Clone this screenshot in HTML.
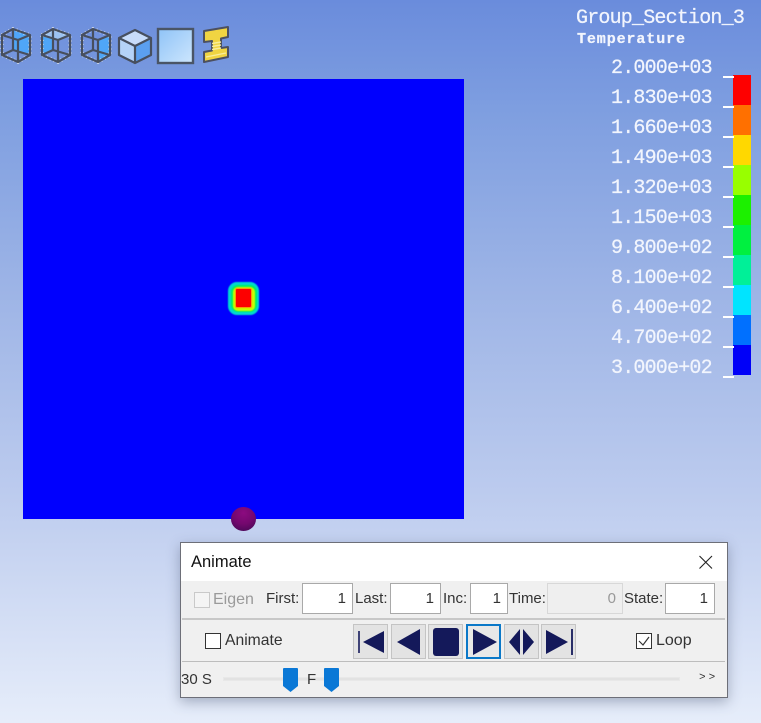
<!DOCTYPE html>
<html><head><meta charset="utf-8"><style>
html,body{margin:0;padding:0}
body{width:761px;height:723px;position:relative;overflow:hidden;background:linear-gradient(180deg,#6a8cdc 0%,#7e9ee0 15%,#9db4e6 40%,#bccbee 68%,#e6edfa 100%);font-family:"Liberation Sans","Noto Sans CJK SC",sans-serif}
.a{position:absolute}
.m{position:absolute;font-family:"Liberation Mono",monospace;color:#f2f5fd;white-space:pre;-webkit-text-stroke:.25px #f2f5fd}
.v{font-size:20px;letter-spacing:-.8px;left:611px;line-height:20px;font-weight:400}
.s{position:absolute;background:#fff;left:723px;width:11px;height:1.5px}
.seg{position:absolute;left:733px;width:18px;height:30px}
.t{position:absolute;font-size:15px;color:#333;line-height:18px;white-space:pre}
.i{position:absolute;top:583px;height:29px;background:#fff;border:1px solid #a9a9a9;box-sizing:content-box;text-align:right;font-size:15px;line-height:29px;color:#333}
.i span{margin-right:6px}
.b{position:absolute;top:624px;width:33px;height:33px;background:#e3e3e3;border:1px solid #c4c4c4}
.b svg{display:block;width:33px;height:33px}
</style></head><body>
<svg class="a" style="left:0;top:24px" width="235" height="44" viewBox="0 0 235 44" fill="none">
<defs>
<linearGradient id="g" x1="0" y1="0" x2="1" y2="1"><stop offset="0" stop-color="#8fc3f7"/><stop offset="1" stop-color="#cde6fd"/></linearGradient>
<path id="c1" d="M2 11 13 5 30 11V31L18 38 2 31Z"/>
</defs>
<!-- icon 1 -->
<path d="M13 5 30 11V31L13 26Z" fill="#4fa6f8"/>
<use href="#c1" stroke="#e4e8f0" stroke-width="3.6" stroke-dasharray="1 3"/>
<path d="M2 11 13 5 30 11V31L18 38 2 31Z M2 11 18 16 30 11 M18 16V38 M13 5V26 M2 31 13 26 30 31" stroke="#474f5e" stroke-width="2.2" stroke-linejoin="round"/>
<!-- icon 2 -->
<g transform="translate(40,0)">
<path d="M2 11 13 5V26L2 31Z" fill="#4fa6f8"/><path d="M2 11 13 5 30 11 18 16Z" fill="#9cc2f2"/>
<use href="#c1" stroke="#e4e8f0" stroke-width="3.6" stroke-dasharray="1 3"/>
<path d="M2 11 13 5 30 11V31L18 38 2 31Z M2 11 18 16 30 11 M18 16V38 M13 5V26 M2 31 13 26 30 31" stroke="#474f5e" stroke-width="2.2" stroke-linejoin="round"/>
</g>
<!-- icon 3 -->
<g transform="translate(80,0)">
<path d="M18 16 30 11V31L18 38Z" fill="#4fa6f8"/>
<use href="#c1" stroke="#e4e8f0" stroke-width="3.6" stroke-dasharray="1 3"/>
<path d="M2 11 13 5 30 11V31L18 38 2 31Z M2 11 18 16 30 11 M18 16V38 M13 5V26 M2 31 13 26 30 31" stroke="#474f5e" stroke-width="2.2" stroke-linejoin="round"/>
</g>
<!-- solid cube -->
<path d="M119 14 135 6 151 14 135 21Z" fill="#c8dcfa"/>
<path d="M119 15 135 22V38L119 30Z" fill="#b5d3f8"/><path d="M135 22 151 15V30L135 38Z" fill="#5b9fef"/>
<path d="M119 14 135 6 151 14V31L135 39 119 31Z M119 14 135 22 151 14 M135 22V39" stroke="#474f5e" stroke-width="2.2" stroke-linejoin="round"/>
<!-- surface -->
<rect x="158" y="5" width="35" height="34" fill="url(#g)" stroke="#4a5566" stroke-width="2.4"/>
<!-- I-beam -->
<path d="M204 7 228 3V13L221 14.5V24L228 23V33L204 38V28L212 26.5V17L204 18Z" fill="#f0d442" stroke="#4c5060" stroke-width="2" stroke-linejoin="round"/>
<path d="M212 19.5 221 18M212 22.5 221 21M212 25.5 221 24M206 33 226 29" stroke="#f8ee9c" stroke-width="1.4"/>
</svg>
<div class="a" style="left:23px;top:79px;width:441px;height:440px;background:#0000fe"></div>
<div class="a" style="left:228px;top:282px;width:31px;height:33px;border-radius:9px;background:#00d8d0;filter:blur(.6px)"></div>
<div class="a" style="left:231px;top:285px;width:26px;height:27px;border-radius:7px;background:#00f060;filter:blur(.6px)"></div>
<div class="a" style="left:232.5px;top:286.5px;width:22px;height:24px;border-radius:5px;background:#c8ff00;filter:blur(.6px)"></div>
<div class="a" style="left:236px;top:289px;width:14.5px;height:18px;background:#fd0000;border-radius:1px;box-shadow:0 0 1px 1px #ff9000"></div>
<div class="a" style="left:231px;top:507px;width:25px;height:24px;border-radius:50%;background:radial-gradient(circle at 50% 25%,#8c0a80 0%,#74086e 50%,#3c0850 100%)"></div>

<div class="m" style="left:576px;top:9px;font-size:20px;letter-spacing:-.8px;line-height:20px">Group_Section_3</div>
<div class="m" style="left:577px;top:31px;font-size:15px;letter-spacing:.9px;font-weight:700;line-height:18px">Temperature</div>
<div class="m v" style="top:59px">2.000e+03</div>
<div class="m v" style="top:89px">1.830e+03</div>
<div class="m v" style="top:119px">1.660e+03</div>
<div class="m v" style="top:149px">1.490e+03</div>
<div class="m v" style="top:179px">1.320e+03</div>
<div class="m v" style="top:209px">1.150e+03</div>
<div class="m v" style="top:239px">9.800e+02</div>
<div class="m v" style="top:269px">8.100e+02</div>
<div class="m v" style="top:299px">6.400e+02</div>
<div class="m v" style="top:329px">4.700e+02</div>
<div class="m v" style="top:359px">3.000e+02</div>
<div class="seg" style="top:75px;background:#fe0000"></div>
<div class="seg" style="top:105px;background:#ff7000"></div>
<div class="seg" style="top:135px;background:#ffd800"></div>
<div class="seg" style="top:165px;background:#98ff00"></div>
<div class="seg" style="top:195px;background:#1cf000"></div>
<div class="seg" style="top:225px;background:#00f040"></div>
<div class="seg" style="top:255px;background:#00f098"></div>
<div class="seg" style="top:285px;background:#00e4ff"></div>
<div class="seg" style="top:315px;background:#0070ff"></div>
<div class="seg" style="top:345px;background:#0000f8"></div>
<div class="s" style="top:76px"></div><div class="s" style="top:106px"></div><div class="s" style="top:136px"></div><div class="s" style="top:166px"></div><div class="s" style="top:196px"></div><div class="s" style="top:226px"></div><div class="s" style="top:256px"></div><div class="s" style="top:286px"></div><div class="s" style="top:316px"></div><div class="s" style="top:346px"></div><div class="s" style="top:376px"></div>

<div class="a" style="left:180px;top:542px;width:546px;height:154px;background:#f0f0f0;border:1px solid #6d6f78;box-shadow:0 4px 12px rgba(50,60,90,.35)"></div>
<div class="a" style="left:181px;top:543px;width:546px;height:38px;background:#fff"></div>
<div class="t" style="left:191px;top:553px;color:#111;font-size:16.5px">Animate</div>
<svg class="a" style="left:698px;top:554px" width="16" height="16"><path d="M1.5 2 14 14.5M14 2 1.5 14.5" stroke="#222" stroke-width="1.1"/></svg>

<div class="a" style="left:194px;top:592px;width:14px;height:14px;border:1px solid #c9c9c9;background:#f4f4f4"></div>
<div class="t" style="left:213px;top:591px;color:#9a9a9a;font-size:16px">Eigen</div>
<div class="t" style="left:266px;top:590px">First:</div>
<div class="i" style="left:302px;width:49px"><span>1</span></div>
<div class="t" style="left:355px;top:590px">Last:</div>
<div class="i" style="left:390px;width:49px"><span>1</span></div>
<div class="t" style="left:443px;top:590px">Inc:</div>
<div class="i" style="left:470px;width:36px"><span>1</span></div>
<div class="t" style="left:509px;top:590px">Time:</div>
<div class="i" style="left:547px;width:74px;background:#efefef;border-color:#d8d8d8;color:#999"><span>0</span></div>
<div class="t" style="left:624px;top:590px">State:</div>
<div class="i" style="left:665px;width:48px"><span>1</span></div>
<div class="a" style="left:182px;top:618px;width:543px;height:2px;background:#c8c8c8"></div>

<div class="a" style="left:205px;top:633px;width:14px;height:14px;border:1px solid #333;background:#fff"></div>
<div class="t" style="left:225px;top:632px;font-size:15.7px">Animate</div>

<div class="b" style="left:353px"><svg viewBox="0 0 33 33"><path d="M5 6V28" stroke="#14195a" stroke-width="1.6"/><path d="M30 6V28L9 17Z" fill="#14195a"/></svg></div>
<div class="b" style="left:391px"><svg viewBox="0 0 33 33"><path d="M28 4V30L5 17Z" fill="#14195a"/></svg></div>
<div class="b" style="left:428px"><svg viewBox="0 0 33 33"><rect x="4" y="3" width="26" height="28" rx="3" fill="#14195a"/></svg></div>
<div class="b" style="left:466px;width:31px;height:31px;border:2px solid #0a78c8;background:#e8e8e8"><svg style="width:31px;height:31px" viewBox="0 0 31 31"><path d="M5 3V29L29 16Z" fill="#14195a"/></svg></div>
<div class="b" style="left:504px"><svg viewBox="0 0 33 33"><path d="M15 4V30L4 17ZM18 4V30L29 17Z" fill="#14195a"/></svg></div>
<div class="b" style="left:541px"><svg viewBox="0 0 33 33"><path d="M4 5V29L26 17Z" fill="#14195a"/><path d="M30 4V30" stroke="#14195a" stroke-width="1.8"/></svg></div>

<div class="a" style="left:636px;top:633px;width:14px;height:14px;border:1px solid #333;background:#fff"></div>
<svg class="a" style="left:637px;top:634px" width="14" height="14"><path d="M2 7 6 11 12 3" fill="none" stroke="#333" stroke-width="1.2"/></svg>
<div class="t" style="left:656px;top:632px;font-size:16px">Loop</div>
<div class="a" style="left:182px;top:661px;width:543px;height:1px;background:#bdbdbd"></div>

<div class="t" style="left:181px;top:671px">30 S</div>
<div class="a" style="left:223px;top:677px;width:457px;height:4px;background:#e2e2e2;border:1px solid #e8e8e8;box-sizing:border-box"></div>
<svg class="a" style="left:283px;top:668px" width="15" height="25"><path d="M0 1Q0 0 1 0H14Q15 0 15 1V18L7.5 24 0 18Z" fill="#0a78d6"/></svg>
<div class="t" style="left:307px;top:671px">F</div>
<svg class="a" style="left:324px;top:668px" width="15" height="25"><path d="M0 1Q0 0 1 0H14Q15 0 15 1V18L7.5 24 0 18Z" fill="#0a78d6"/></svg>
<div class="t" style="left:699px;top:669px;font-size:11px;letter-spacing:3px;font-family:'Liberation Mono',monospace">&gt;&gt;</div>
</body></html>
